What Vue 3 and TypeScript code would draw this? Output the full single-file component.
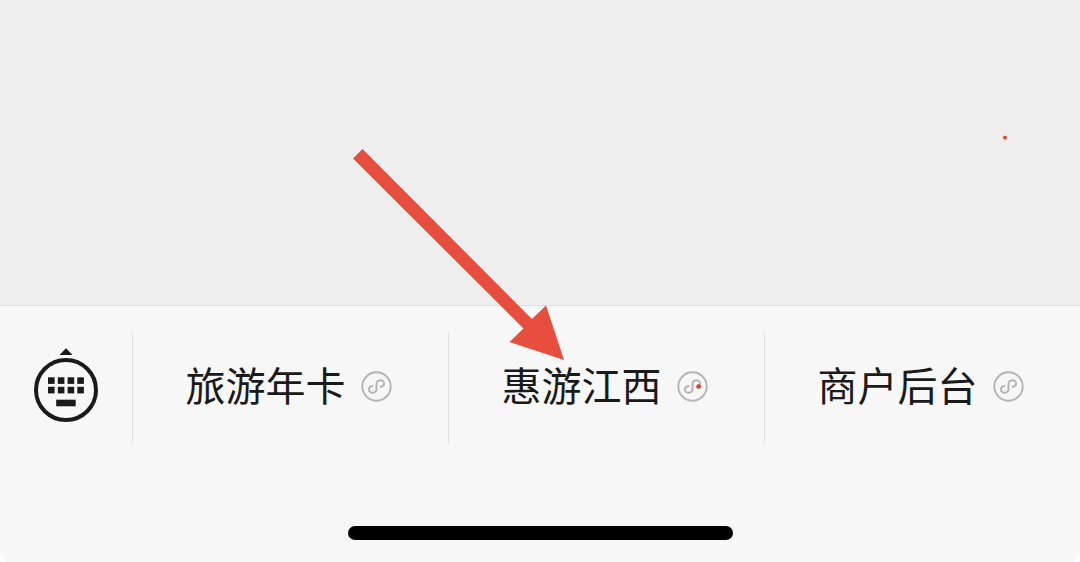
<script setup lang="ts">
interface MenuEntry {
  label: string
  marked: boolean
}

const entries: MenuEntry[] = [
  { label: '旅游年卡', marked: false },
  { label: '惠游江西', marked: true },
  { label: '商户后台', marked: false },
]

const keyColumns: number[] = [14, 23.8, 33.6, 43.3]
const keyRows: number[] = [29.3, 38.8]
</script>

<template>
  <div class="screen">
    <main class="chat"></main>
    <footer class="panel">
      <nav class="menu">
        <div class="keyboard">
          <svg width="64" height="75" viewBox="0 0 64 75">
            <path d="M25.5 7 L32 0.2 L38.5 7 Z" fill="#1a1a1a" />
            <circle cx="32" cy="42" r="30" fill="none" stroke="#1a1a1a" stroke-width="4" />
            <template v-for="y in keyRows" :key="y">
              <rect v-for="x in keyColumns" :key="x" :x="x" :y="y" width="6.6" height="6.6" fill="#1a1a1a" />
            </template>
            <rect x="22.2" y="51.7" width="19.5" height="6.6" fill="#1a1a1a" />
          </svg>
        </div>
        <div v-for="entry in entries" :key="entry.label" class="entry">
          <span class="label">{{ entry.label }}</span>
          <svg class="mini" width="32" height="32" viewBox="-15.5 -15.5 32 32">
            <circle r="14.2" fill="none" stroke="#b5b5b5" stroke-width="1.9" />
            <path
              d="M-4 -0.4 C-6.2 0 -7.6 1.3 -7.6 3 C-7.6 4.9 -6 6.3 -4 6.3 C-1.7 6.3 0 4.6 0 2.4 V-2.4 C0 -4.6 1.7 -6.3 4 -6.3 C6 -6.3 7.6 -4.9 7.6 -3 C7.6 -1.3 6.2 0 4 0.4"
              fill="none"
              stroke="#b5b5b5"
              stroke-width="2"
              stroke-linecap="round"
            />
            <circle v-if="entry.marked" cx="6.2" cy="0" r="2.3" fill="#cf4425" />
          </svg>
        </div>
      </nav>
      <div class="home"></div>
    </footer>
    <svg class="overlay" width="1080" height="562" viewBox="0 0 1080 562">
      <path d="M362.5 149 L532 319 L546 305.5 L564 360 L509.5 342 L523.5 328.5 L353 158.5 Z" fill="#e84e3d" />
      <circle cx="1005" cy="137.6" r="3.2" fill="#f8dfda" />
      <circle cx="1005" cy="137.6" r="1.9" fill="#d9472f" />
      <path d="M0 556 H3 Q4 559 6 560.5 V562 H0 Z M1080 556 H1077 Q1076 559 1074 560.5 V562 H1080 Z" fill="#fff" />
    </svg>
  </div>
</template>

<style>
body {
  margin: 0;
}
</style>

<style scoped>
.screen {
  position: relative;
  display: flex;
  flex-direction: column;
  width: 1080px;
  height: 562px;
  overflow: hidden;
  background: #eee;
  font-family: "Noto Sans CJK SC", sans-serif;
}

.chat {
  flex: 1;
}

.panel {
  display: flex;
  flex-direction: column;
  align-items: center;
  box-sizing: border-box;
  height: 257px;
  border-top: 1px solid #dedede;
  background: #f7f7f7;
}

.menu {
  display: flex;
  width: 100%;
  height: 110px;
  margin-top: 27px;
}

.keyboard {
  box-sizing: border-box;
  width: 132px;
  padding: 15px 0 0 34px;
}

.keyboard svg {
  display: block;
}

.entry {
  display: flex;
  align-items: center;
  box-sizing: border-box;
  width: 316px;
  border-left: 1px solid #dedede;
  padding: 0 0 2px 52.5px;
}

.label {
  width: 160px;
  padding-bottom: 6px;
  color: #1a1a1a;
  font-size: 40px;
  line-height: 60px;
  white-space: nowrap;
}

.mini {
  margin-left: 15.5px;
}

.home {
  width: 385px;
  height: 14px;
  margin-top: 83px;
  border-radius: 7px;
  background: #000;
}

.overlay {
  position: absolute;
  inset: 0;
  pointer-events: none;
}
</style>
